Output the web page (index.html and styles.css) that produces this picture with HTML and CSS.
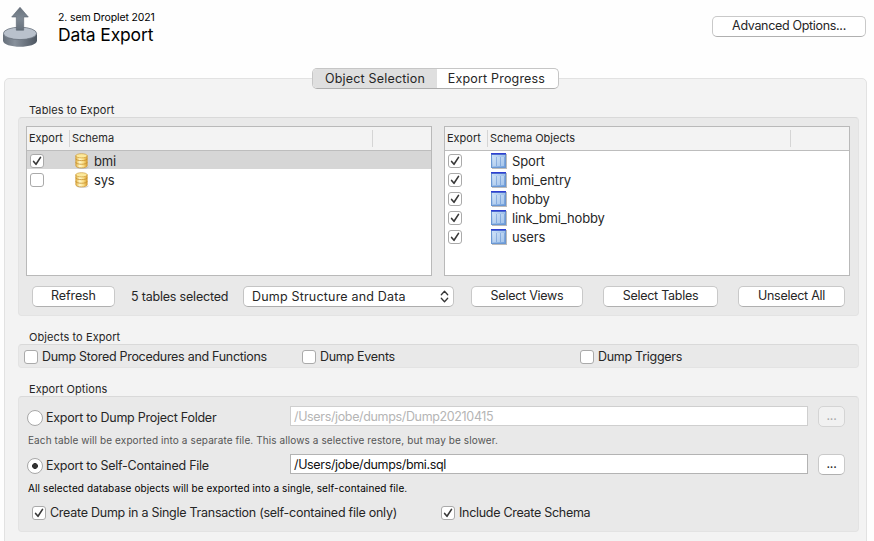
FILE: index.html
```html
<!DOCTYPE html>
<html lang="en">
<head>
<meta charset="utf-8">
<title>Data Export</title>
<link rel="stylesheet" href="styles.css">
</head>
<body>
<svg class="defs" width="0" height="0" aria-hidden="true">
  <defs>
    <linearGradient id="gold" x1="0" x2="1" y1="0" y2="0">
      <stop offset="0" stop-color="#e6b544"/><stop offset=".35" stop-color="#fff8cc"/><stop offset=".65" stop-color="#fbe08a"/><stop offset="1" stop-color="#d9a032"/>
    </linearGradient>
    <linearGradient id="blue" x1="0" x2="1" y1="0" y2="1">
      <stop offset="0" stop-color="#cfe3f8"/><stop offset="1" stop-color="#6f9fdc"/>
    </linearGradient>
    <linearGradient id="steel" x1="0" x2="1" y1="0" y2="0">
      <stop offset="0" stop-color="#666f7a"/><stop offset=".35" stop-color="#87909b"/><stop offset="1" stop-color="#4d5661"/>
    </linearGradient>
    <linearGradient id="arrow" x1="0" x2="0" y1="0" y2="1">
      <stop offset="0" stop-color="#69737e"/><stop offset=".5" stop-color="#7f8994"/><stop offset="1" stop-color="#66707b"/>
    </linearGradient>
    <symbol id="db" viewBox="0 0 14 16">
      <path d="M1.500 13.200c1 2.300 11 2.300 12 0v1c-1 2-11 2-12 0z" fill="#a9a9a9" opacity=".6"/>
      <path d="M.8 2.800v10c0 2.700 11.400 2.700 11.400 0v-10z" fill="url(#gold)" stroke="#cb9636" stroke-width=".7"/>
      <ellipse cx="6.500" cy="2.800" rx="5.700" ry="2.100" fill="#fce99c" stroke="#cf9c3c" stroke-width=".7"/>
      <path d="M.8 5.700c0 2.600 11.400 2.600 11.400 0M.8 9.300c0 2.600 11.400 2.600 11.400 0" fill="none" stroke="#c48d2b" stroke-width=".8"/>
    </symbol>
    <symbol id="table" viewBox="0 0 16 16">
      <path d="M1 1h15v15H1z" fill="#8d8d8d" opacity=".6"/>
      <path d="M0 0h15v15H0z" fill="#6b97d2"/>
      <path d="M1 2h13v12H1z" fill="url(#blue)"/>
      <path d="M2 4h3v9H2zM6 4h3v9H6zM10 4h3v9h-3z" fill="#d5e5f8" opacity=".5"/>
      <path d="M5.500 4v9M9.500 4v9M13.500 4v9" stroke="#7ba1d6" stroke-width=".6"/>
      <path d="M0 0h15v1.500H0z" fill="#2f3fd0"/>
    </symbol>
    <symbol id="check" viewBox="0 0 14 14">
      <path d="M3.600 7.400l2.400 2.900 4.500-6.900" fill="none" stroke="#383838" stroke-width="1.600" stroke-linecap="round" stroke-linejoin="round"/>
    </symbol>
  </defs>
</svg>

<header class="page-head">
  <svg class="logo" width="36" height="42" viewBox="0 0 36 42">
    <path d="M0 26.500v7c0 8.300 34 8.300 34 0v-7z" fill="url(#steel)"/>
    <ellipse cx="17" cy="26.400" rx="16.600" ry="6.200" fill="#b9c1cc" stroke="#69727d" stroke-width=".8"/>
    <path d="M17 .300l8.300 9.700h-4.600V23.200h-7.400V10H8.700z" fill="url(#arrow)" stroke="#59636e" stroke-width=".6"/>
  </svg>
  <div class="titles">
    <div class="subtitle">2. sem Droplet 2021</div>
    <h1 class="title">Data Export</h1>
  </div>
  <button class="btn advanced">Advanced Options...</button>
</header>

<main class="panel">
  <nav class="tabs">
    <div class="tab active">Object Selection</div>
    <div class="tab progress">Export Progress</div>
  </nav>

  <h2 class="label">Tables to Export</h2>
  <section class="group tables">
    <div class="lists">
      <div class="list">
        <div class="list-head"><span class="col-export">Export</span><span class="col-name">Schema</span></div>
        <div class="row selected"><span class="check"><svg><use href="#check"/></svg></span><svg class="db"><use href="#db"/></svg><span>bmi</span></div>
        <div class="row"><span class="check"></span><svg class="db"><use href="#db"/></svg><span>sys</span></div>
      </div>
      <div class="list">
        <div class="list-head"><span class="col-export">Export</span><span class="col-name">Schema Objects</span></div>
        <div class="row"><span class="check"><svg><use href="#check"/></svg></span><svg class="tb"><use href="#table"/></svg><span>Sport</span></div>
        <div class="row"><span class="check"><svg><use href="#check"/></svg></span><svg class="tb"><use href="#table"/></svg><span>bmi_entry</span></div>
        <div class="row"><span class="check"><svg><use href="#check"/></svg></span><svg class="tb"><use href="#table"/></svg><span>hobby</span></div>
        <div class="row"><span class="check"><svg><use href="#check"/></svg></span><svg class="tb"><use href="#table"/></svg><span>link_bmi_hobby</span></div>
        <div class="row"><span class="check"><svg><use href="#check"/></svg></span><svg class="tb"><use href="#table"/></svg><span>users</span></div>
      </div>
    </div>
    <div class="actions">
      <button class="btn refresh">Refresh</button>
      <span class="count">5 tables selected</span>
      <div class="select"><span>Dump Structure and Data</span>
        <svg width="9" height="13" viewBox="0 0 9 13"><path d="M1.300 4.700l3.200-3.400 3.200 3.400M1.300 8.300l3.200 3.400 3.200-3.400" fill="none" stroke="#333" stroke-width="1.300" stroke-linecap="round" stroke-linejoin="round"/></svg>
      </div>
      <button class="btn views">Select Views</button>
      <button class="btn select-tables">Select Tables</button>
      <button class="btn unselect">Unselect All</button>
    </div>
  </section>

  <h2 class="label">Objects to Export</h2>
  <section class="group objects-row">
    <label class="option procs"><span class="check"></span><span>Dump Stored Procedures and Functions</span></label>
    <label class="option events"><span class="check"></span><span>Dump Events</span></label>
    <label class="option"><span class="check"></span><span>Dump Triggers</span></label>
  </section>

  <h2 class="label">Export Options</h2>
  <section class="group options">
    <div class="target disabled">
      <label class="choice"><span class="radio"></span><span>Export to Dump Project Folder</span></label>
      <div class="field">/Users/jobe/dumps/Dump20210415</div>
      <button class="btn browse">...</button>
    </div>
    <p class="hint muted">Each table will be exported into a separate file. This allows a selective restore, but may be slower.</p>
    <div class="target">
      <label class="choice"><span class="radio on"></span><span>Export to Self-Contained File</span></label>
      <div class="field">/Users/jobe/dumps/bmi.sql</div>
      <button class="btn browse">...</button>
    </div>
    <p class="hint">All selected database objects will be exported into a single, self-contained file.</p>
    <div class="flags">
      <label class="option single"><span class="check"><svg><use href="#check"/></svg></span><span>Create Dump in a Single Transaction (self-contained file only)</span></label>
      <label class="option"><span class="check"><svg><use href="#check"/></svg></span><span>Include Create Schema</span></label>
    </div>
  </section>
</main>
</body>
</html>
```
FILE: styles.css
```css
* { box-sizing: border-box; }
body {
  margin: 0;
  height: 541px;
  overflow: hidden;
  background: #fefefe;
  color: #262626;
  font: 12.500px/16px Inter, "Liberation Sans", sans-serif;
  white-space: nowrap;
}
.defs { position: absolute; }
h1, h2, p { margin: 0; font-weight: 400; }

.page-head { display: flex; align-items: flex-start; height: 78px; padding: 7px 8px 0 3px; }
.logo { flex: none; }
.titles { margin-left: 19px; padding-top: 4px; color: #000; flex: 1; }
.subtitle { font-size: 10.500px; line-height: 14px; letter-spacing: -.12px; }
.title { font-size: 17.500px; line-height: 20px; letter-spacing: -.15px; }

.btn {
  height: 21px;
  padding: 0 0 2px;
  border: 1px solid #c9c9c9;
  border-bottom-color: #b0b0b0;
  border-radius: 5px;
  background: #fff;
  color: #262626;
  font: inherit;
  line-height: 16px;
  letter-spacing: -.26px;
  text-align: center;
}
.advanced { width: 154px; margin-top: 9px; letter-spacing: -.32px; }

.panel {
  width: 863px;
  height: 470px;
  margin-left: 4px;
  padding: 0 8px 0 13px;
  border: 1px solid #e2e2e2;
  border-radius: 5px;
  background: #f3f3f3;
}
.tabs {
  display: flex;
  width: 247px;
  height: 21px;
  margin: -11px 0 0 294px;
  border: 1px solid #c6c6c6;
  border-bottom-color: #adadad;
  border-radius: 5px;
  background: #fff;
  overflow: hidden;
  line-height: 19px;
  letter-spacing: .18px;
  text-align: center;
}
.tab { flex: none; width: 124px; }
.tab.active { background: #dfdfdf; }
.tab.progress { width: 119px; }

.label { height: 14px; margin: 14px 0 0 11px; font-size: 11px; line-height: 14px; letter-spacing: .08px; }
.group {
  width: 841px;
  border: 1px solid #e3e3e3;
  border-top-color: #d9d9d9;
  border-radius: 4px;
  background: #e9e9e9;
}
.tables { height: 199px; padding: 8px 8px 0 7px; }
.lists { display: flex; gap: 12px; }
.list { width: 406px; height: 150px; border: 1px solid #b9b9b9; background: #fff; }
.list-head {
  display: flex;
  align-items: center;
  height: 24px;
  border-bottom: 1px solid #bdbdbd;
  background: #f3f3f3;
  font-size: 11px;
  line-height: 17px;
}
.col-export, .col-name { height: 17px; padding-left: 2px; border-right: 1px solid #d5d5d5; }
.col-export { width: 43px; }
.col-name { width: 303px; }
.row { display: flex; align-items: center; height: 19px; padding-left: 3px; font-size: 13px; letter-spacing: -.15px; }
.row.selected { background: linear-gradient(#d6d6d6 18px, #fff 18px); }
.check {
  flex: none;
  width: 14px;
  height: 14px;
  border: 1px solid #aaa;
  border-radius: 3px;
  background: #fff;
}
.check svg { display: block; width: 14px; height: 14px; margin: -1px; }
.db { width: 14px; height: 16px; margin: 0 5px 0 31px; }
.tb { width: 16px; height: 16px; margin: 0 5px 0 29px; }

.actions { display: flex; align-items: center; height: 21px; margin: 10px 0 0 6px; }
.refresh { width: 83px; letter-spacing: -.1px; }
.count { width: 112px; padding-left: 16px; flex: none; letter-spacing: -.2px; }
.select {
  display: flex;
  align-items: center;
  justify-content: space-between;
  width: 211px;
  height: 21px;
  margin-left: 16px;
  padding: 0 4px 0 8px;
  border: 1px solid #c4c4c4;
  border-bottom-color: #adadad;
  border-radius: 5px;
  background: #fff;
  letter-spacing: .19px;
}
.views { width: 112px; margin-left: 17px; }
.select-tables { width: 115px; margin-left: 20px; }
.unselect { width: 107px; margin-left: 20px; }

.objects-row { display: flex; align-items: center; height: 24px; padding: 2px 0 0 5px; }
.option { display: flex; align-items: center; gap: 4px; letter-spacing: -.29px; }
.procs, .events { width: 278px; }

.options { height: 136px; padding: 9px 0 0 8px; }
.target { display: flex; align-items: center; height: 21px; }
.choice { display: flex; align-items: center; gap: 3px; width: 263px; padding-top: 2px; letter-spacing: -.25px; }
.radio { width: 16px; height: 16px; border: 1px solid #a8a8a8; border-radius: 50%; background: #fff; }
.radio.on { background: radial-gradient(circle, #333 2.600px, #fff 3.200px); }
.field { width: 518px; height: 20px; margin-bottom: 1px; padding-left: 3px; border: 1px solid #b3b3b3; background: #fff; color: #111; line-height: 20px; letter-spacing: -.35px; }
.browse { width: 27px; margin-left: 10px; }
.disabled .field { border-color: #cfcfcf; color: #b5b5b5; }
.disabled .browse { border-color: #d4d4d4; background: #f1f1f1; color: #aaa; }
.hint { height: 14px; margin: 6px 0 7px 1px; font-size: 10px; line-height: 14px; letter-spacing: .11px; color: #000; }
.hint.muted { color: #555; letter-spacing: .1px; }
.flags { display: flex; margin: 10px 0 0 5px; }
.single { width: 409px; letter-spacing: -.26px; }
```
